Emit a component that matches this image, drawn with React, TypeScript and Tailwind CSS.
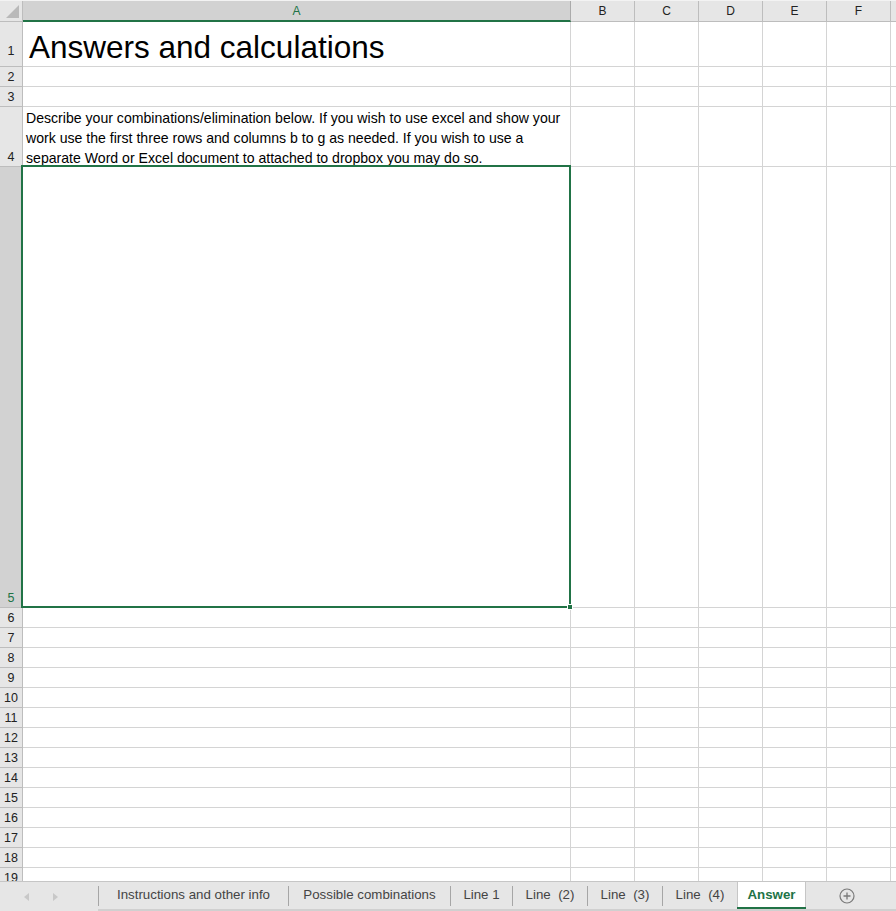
import React from 'react';

// Column layout of the visible sheet area
const columns = [
  { key: 'A', width: 'w-[548px]' },
  { key: 'B', width: 'w-[64px]' },
  { key: 'C', width: 'w-[64px]' },
  { key: 'D', width: 'w-[64px]' },
  { key: 'E', width: 'w-[64px]' },
  { key: 'F', width: 'w-[64px]' },
  { key: 'G', width: 'w-[64px]' },
];

const rows = [
  { n: 1, h: 'h-[45px]' },
  { n: 2, h: 'h-[20px]' },
  { n: 3, h: 'h-[20px]' },
  { n: 4, h: 'h-[60px]' },
  { n: 5, h: 'h-[441px]' },
  ...Array.from({ length: 14 }, (_, i) => ({ n: i + 6, h: 'h-[20px]' })),
];

const tabs = [
  { label: 'Instructions and other info', width: 'w-[190px]' },
  { label: 'Possible combinations', width: 'w-[162px]' },
  { label: 'Line 1', width: 'w-[62px]' },
  { label: 'Line  (2)', width: 'w-[75px]' },
  { label: 'Line  (3)', width: 'w-[75px]' },
  { label: 'Line  (4)', width: 'w-[75px]' },
];

const CellContent: React.FC<{ row: number; col: string }> = ({ row, col }) => {
  if (col !== 'A') return null;
  if (row === 1) {
    return (
      <span className="absolute left-[6px] bottom-[3px] text-[31.5px] leading-none text-black whitespace-nowrap">
        Answers and calculations
      </span>
    );
  }
  if (row === 4) {
    return (
      <div className="absolute left-[3px] bottom-[-2px] text-[14.1px] leading-[20px] text-black whitespace-nowrap">
        Describe your combinations/elimination below. If you wish to use excel and show your
        <br />
        work use the first three rows and columns b to g as needed. If you wish to use a
        <br />
        separate Word or Excel document to attached to dropbox you may do so.
      </div>
    );
  }
  if (row === 5) {
    return (
      <div className="absolute -left-[2px] -top-[2px] -right-[1px] -bottom-[1px] border-2 border-[#217346] z-10">
        <div className="absolute -right-[4px] -bottom-[4px] w-[6px] h-[6px] bg-[#217346] border border-white" />
      </div>
    );
  }
  return null;
};

const App: React.FC = () => {
  return (
    <div className="w-[896px] h-[911px] bg-white flex flex-col overflow-hidden font-['Liberation_Sans',Arial,sans-serif]">
      {/* Column headers */}
      <div className="flex h-[22px] shrink-0 bg-[#e6e6e6] border-t border-[#f3f3f3]">
        <div className="w-[23px] shrink-0 relative border-r border-b border-[#bdbdbd]">
          <div className="absolute right-[3px] bottom-[3px] w-0 h-0 border-l-[13px] border-l-transparent border-b-[13px] border-b-[#b9b9b9]" />
        </div>
        {columns.map((c) =>
          c.key === 'A' ? (
            <div
              key={c.key}
              className={`${c.width} shrink-0 bg-[#d2d2d2] border-r border-[#ababab] border-b-2 border-b-[#217346] flex items-center justify-center text-[12px] text-[#217346]`}
            >
              {c.key}
            </div>
          ) : (
            <div
              key={c.key}
              className={`${c.width} shrink-0 border-r border-b border-[#bdbdbd] flex items-center justify-center text-[12px] text-[#222]`}
            >
              {c.key === 'G' ? '' : c.key}
            </div>
          )
        )}
      </div>

      {/* Rows */}
      <div className="flex-1 overflow-hidden">
        {rows.map((r) => (
          <div key={r.n} className={`flex ${r.h} shrink-0`}>
            <div
              className={`w-[23px] shrink-0 border-r border-b border-[#bdbdbd] flex items-end justify-center text-[12.5px] leading-[17px] ${
                r.n === 1 ? 'pb-[6px]' : ''
              } ${r.n === 5 ? 'bg-[#d2d2d2] text-[#217346]' : 'bg-[#e6e6e6] text-[#222]'}`}
            >
              {r.n}
            </div>
            {columns.map((c) => (
              <div key={c.key} className={`${c.width} shrink-0 relative border-r border-b border-[#d4d4d4]`}>
                <CellContent row={r.n} col={c.key} />
              </div>
            ))}
          </div>
        ))}
      </div>

      {/* Sheet tab bar */}
      <div className="h-[30px] shrink-0 bg-[#e6e6e6] border-t border-[#c6c6c6] flex items-stretch text-[13.3px] text-[#444]">
        <div className="w-[98px] shrink-0 flex items-center pl-[24px] gap-[22px]">
          <svg width="6" height="8" viewBox="0 0 6 8">
            <path d="M5 0 L0 4 L5 8 Z" fill="#c8c8c8" />
          </svg>
          <svg width="6" height="8" viewBox="0 0 6 8">
            <path d="M1 0 L6 4 L1 8 Z" fill="#c8c8c8" />
          </svg>
        </div>
        <div className="flex items-stretch border-b-[2px] border-[#d0d0d0] flex-1">
          {tabs.map((t) => (
            <div key={t.label} className={`${t.width} shrink-0 flex items-center`}>
              <div className="w-px h-[20px] bg-[#a6a6a6]" />
              <span className="flex-1 text-center whitespace-pre pb-[1px]">{t.label}</span>
            </div>
          ))}
          <div className="-mt-px w-[69px] shrink-0 bg-white border-x border-t border-[#c6c6c6] flex items-center justify-center relative">
            <span className="font-bold text-[#217346] text-[13.3px] pb-[1px]">Answer</span>
            <div className="absolute left-[-1px] right-[-1px] bottom-0 h-[2px] bg-[#217346]" />
          </div>
          <div className="flex-1 flex items-center pl-[33px]">
            <svg width="16" height="16" viewBox="0 0 16 16">
              <circle cx="8" cy="8" r="7" fill="none" stroke="#7a7a7a" strokeWidth="1.2" />
              <path d="M8 4.5 V11.5 M4.5 8 H11.5" stroke="#7a7a7a" strokeWidth="1.3" />
            </svg>
          </div>
        </div>
      </div>
    </div>
  );
};

export default App;
